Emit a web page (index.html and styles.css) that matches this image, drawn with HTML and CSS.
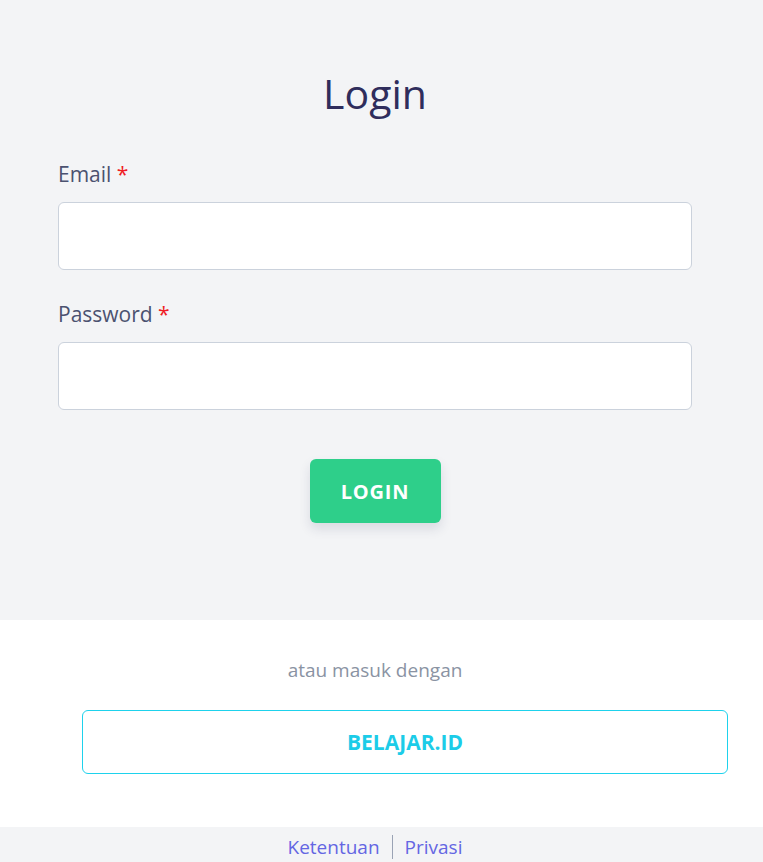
FILE: index.html
```html
<!DOCTYPE html>
<html lang="id">
<head>
    <meta charset="UTF-8">
    <meta name="viewport" content="width=device-width, initial-scale=1.0">
    <title>Login</title>
    <link rel="stylesheet" href="styles.css">
</head>
<body>

    <div class="login-panel">
        <h1>Login</h1>
        <form id="loginForm">
            <label for="email">Email <span class="req">*</span></label>
            <input type="email" id="email" name="email">

            <label for="password">Password <span class="req">*</span></label>
            <input type="password" id="password" name="password">

            <div class="actions">
                <button type="submit" class="btn-login">LOGIN</button>
            </div>
        </form>
    </div>

    <div class="sso-panel">
        <p class="sso-text">atau masuk dengan</p>
        <a href="#" class="btn-sso">BELAJAR.ID</a>
    </div>

    <div class="footer">
        <a href="#">Ketentuan</a>
        <span class="sep"></span>
        <a href="#">Privasi</a>
    </div>

</body>
</html>
```

FILE: styles.css
```css
/* Basic reset */
* {
    margin: 0;
    padding: 0;
    box-sizing: border-box;
}

body {
    font-family: 'Open Sans', 'Noto Sans', sans-serif;
    background-color: #f3f4f6;
}

.login-panel {
    background-color: #f3f4f6;
    padding: 68px 71px 97px 58px;
}

.login-panel h1 {
    text-align: center;
    font-size: 41px;
    font-weight: 400;
    line-height: 50px;
    color: #2f2d5c;
    margin-bottom: 42px;
}

.login-panel label {
    display: block;
    font-size: 21px;
    line-height: 28px;
    color: #4b5270;
    margin-bottom: 14px;
}

.login-panel .req {
    color: #ef1c24;
}

.login-panel input {
    display: block;
    width: 100%;
    height: 68px;
    background-color: #fff;
    border: 1px solid #cbd2dc;
    border-radius: 6px;
    padding: 0 16px;
    font-size: 18px;
    font-family: inherit;
    margin-bottom: 30px;
}

.login-panel input:last-of-type {
    margin-bottom: 0;
}

.actions {
    display: flex;
    justify-content: center;
    margin-top: 49px;
}

.btn-login {
    width: 131px;
    height: 64px;
    background-color: #2ecf8a;
    color: #fff;
    border: none;
    border-radius: 6px;
    font-family: inherit;
    font-size: 20px;
    font-weight: 700;
    letter-spacing: 0.8px;
    box-shadow: 0 6px 12px rgba(30, 40, 80, 0.12);
    cursor: pointer;
}

.sso-panel {
    background-color: #fff;
    padding: 37px 35px 53px 82px;
}

.sso-text {
    text-align: center;
    margin-right: 60px;
    font-size: 19px;
    line-height: 26px;
    color: #8a93a3;
    margin-bottom: 27px;
}

.btn-sso {
    display: flex;
    justify-content: center;
    align-items: center;
    height: 64px;
    border: 1px solid #1ed2ec;
    border-radius: 6px;
    color: #1ccce8;
    font-size: 21px;
    font-weight: 700;
    text-decoration: none;
}

.footer {
    display: flex;
    justify-content: center;
    align-items: center;
    gap: 12px;
    padding: 5px 13px 0 0;
    height: 35px;
    font-size: 19px;
    line-height: 26px;
}

.footer a {
    color: #6466e3;
    text-decoration: none;
}

.footer .sep {
    width: 1px;
    height: 24px;
    background-color: #9aa3b5;
}
```
